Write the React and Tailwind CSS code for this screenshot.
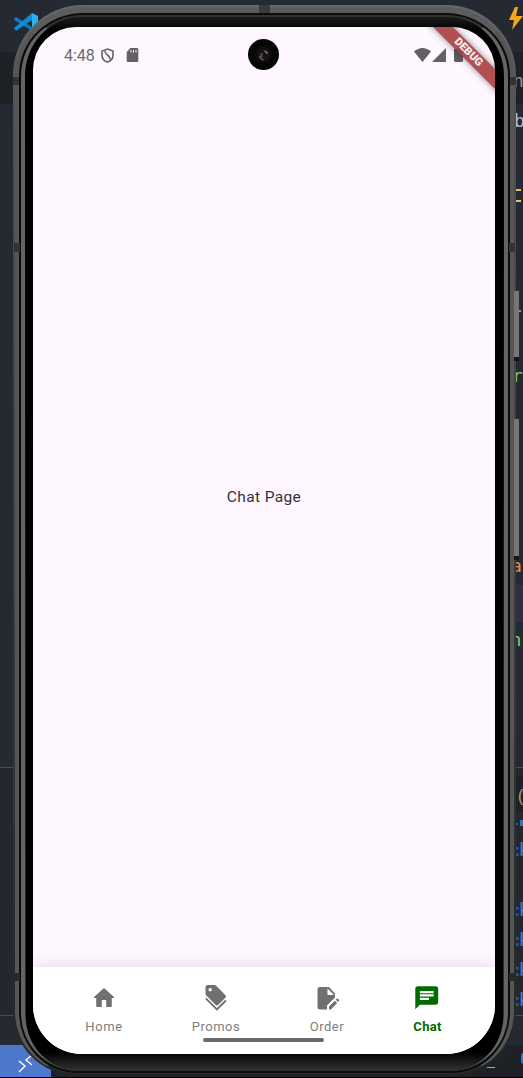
import React from 'react';

const codeMarks = [
  ['top-[69px] left-[513px] text-[#8f98a8]', 'n'],
  ['top-[109px] left-[514px] text-[#b5bdcc]', 'b'],
  ['top-[364px] left-[512px] text-[#8bce70]', 'r'],
  ['top-[554px] left-[511px] text-[#dc8e55]', 'a'],
  ['top-[628px] left-[510.5px] text-[#8bce70]', 'n'],
  ['top-[785px] left-[515px] text-[#a98d70]', '('],
];

const logLines = [
  'top-[838px]',
  'top-[898px]',
  'top-[928px]',
  'top-[958px]',
  'top-[988px]',
];

function Editor() {
  return (
    <div className="absolute inset-0 flex flex-col bg-[#242a33]">
      <div className="h-[52px] bg-[#242932]" />
      <div className="h-[52px] bg-[#1e2227]" />
      <div className="h-[481px] bg-[#242a33]" />
      <div className="flex h-[37px] justify-end">
        <div className="w-[40px] bg-[#2c3140]" />
      </div>
      <div className="h-[145px] bg-[#242a33]" />
      <div className="h-px bg-[#484d54]" />
      <div className="flex h-[247px] justify-end bg-[#23282e] pt-[8px]">
        <div className="h-[36px] w-[40px] bg-[#1e2227]" />
      </div>
      <div className="h-px bg-[#484d54]" />
      <div className="h-[29px] bg-[#242932]" />
      <div className="flex h-[32px] bg-[#1e2227]"><div className="w-[51px] bg-[#4d78cc]" /></div>
      <div className="h-px bg-black" />
      <svg className="absolute top-[12px] left-[14px]" width="25" height="20" viewBox="0 0 25 20">
        <path d="M0 7l2-2 16 10v4L0 8z" fill="#087cc5" />
        <path d="M0 16L18 1v7L2 19z" fill="#1687cf" />
        <path d="M18 1l6 3v12l-6 4z" fill="#2bb0f5" />
      </svg>
      <svg className="absolute top-[1054px] left-[18px]" width="16" height="19" viewBox="0 0 16 19" fill="none" stroke="white" strokeWidth="1.4">
        <path d="M1 7l6 5-6 6M14 1L8 6l6 5" />
      </svg>
      <svg className="absolute top-[7px] left-[509px]" width="14" height="24" viewBox="0 0 14 24">
        <path d="M6 0L0 13h5L3 23l11-14H7l2-9z" fill="#f5a51d" />
      </svg>
      {codeMarks.map(([cls, text], i) => (
        <span key={i} className={`absolute font-['DejaVu_Sans_Mono',monospace] text-[18px] leading-[24px] whitespace-pre ${cls}`}>{text}</span>
      ))}
      {logLines.map((cls) => (
        <span key={cls} className={`absolute left-[512px] font-['DejaVu_Sans_Mono',monospace] text-[18px] leading-[24px] tracking-[-4px] whitespace-pre text-[#2f83f6] ${cls}`}>
          <span className="text-[#2a5e9c]">:</span>k
        </span>
      ))}
      <i className="absolute top-[823px] left-[516px] h-[2px] w-[2px] bg-[#2a5e9c]" />
      <i className="absolute top-[820px] left-[520px] h-[6px] w-[3px] bg-[#2f74c6]" />
      <i className="absolute top-[189px] left-[516px] h-[2px] w-[5px] bg-[#eabd6b]" />
      <i className="absolute top-[200px] left-[516px] h-[2px] w-[5px] bg-[#eabd6b]" />
      <i className="absolute top-[310px] left-[519px] h-[2px] w-[2px] bg-[#dc8055]" />
      <i className="absolute top-[1067px] left-[487px] h-px w-[8px] bg-[#a7adb5]" />
      <i className="absolute top-[1053px] left-[521px] h-[11px] w-[6px] rounded-full bg-[#1684c6]" />
    </div>
  );
}

function StatusBar() {
  return (
    <div className="flex h-[56px] shrink-0 items-center pl-[31px] text-[#626064]">
      <span className="w-[37px] pt-px text-[16px] leading-5 text-[#6d6b6f]">4:48</span>
      <svg width="13" height="15" viewBox="0 0 13 15" fill="none" stroke="currentColor" strokeWidth="1.6">
        <path d="M6.5 1L12 3v4.200c0 3.200-2.200 5.800-5.500 6.900C3.200 13 1 10.400 1 7.200V3z" />
        <path d="M4 3.200c-.6 3.600 5.600 4 5 8.400" />
      </svg>
      <svg className="ml-[12px]" width="13" height="14" viewBox="0 0 13 14" fill="currentColor">
        <path fillRule="evenodd" d="M4.500 0H11a1.300 1.300 0 011.300 1.300v11.400A1.300 1.300 0 0111 14H2a1.300 1.300 0 01-1.300-1.300V4zM4.500 2v2.500H5.500V2zm2.500 0v2.500h1V2zm2.500 0v2.500h1V2z" />
      </svg>
      <div className="ml-auto flex items-center pr-[32px]">
        <svg width="17" height="14" viewBox="0 0 17 14" fill="currentColor"><path d="M0 3.600C5-1.100 12-1.100 17 3.600L8.500 14z" /></svg>
        <svg className="ml-[1px]" width="14" height="14" viewBox="0 0 14 14" fill="currentColor"><path d="M14 0v14H0z" /></svg>
        <svg className="ml-[8px]" width="9" height="14" viewBox="0 0 9 14" fill="currentColor"><path d="M2.500 1V0h4v1H9v12l-1 1H1l-1-1V1z" /></svg>
      </div>
    </div>
  );
}

function Camera() {
  return (
    <div className="absolute top-[12px] left-[215px] size-[31px] rounded-full bg-[#060606] p-[7px]">
      <div className="flex size-[17px] items-center justify-center rounded-full bg-[#100f0f]">
        <svg width="13" height="13" viewBox="0 0 13 13">
          <circle cx="6.500" cy="6.500" r="5.500" fill="#171414" />
          <path d="M2.500 8q1 3 4 4" fill="none" stroke="#77736a" strokeWidth="1.200" />
          <path d="M7.500 3q3 1 2.500 3" fill="none" stroke="#90607f" strokeWidth="1.600" />
          <circle cx="5" cy="7" r="2" fill="#594220" />
          <circle cx="7" cy="7" r="1.500" fill="#100c0f" />
        </svg>
      </div>
    </div>
  );
}

function Tab({ label, className, labelClass = '', children }) {
  return (
    <div className={`flex flex-col items-center ${className}`}>
      <div className="flex h-[30px] items-center justify-center">{children}</div>
      <span className={`mt-[6px] text-[13px] leading-[16px] whitespace-nowrap ${labelClass}`}>{label}</span>
    </div>
  );
}

function Navigation() {
  return (
    <div className="relative flex h-[87px] shrink-0 bg-white pt-[16px] text-[#707070] shadow-[0_-3px_12px_#67507526]">
      <Tab label="Home" className="ml-[31px] w-[80px]" labelClass="tracking-[.65px] text-[#7e7e7e]">
        <svg className="mb-px" width="20" height="19" viewBox="0 0 20 19" fill="currentColor"><path d="M10 0l10 9v1h-2.200v8.200a.8.8 0 01-.8.8h-4.800v-7H7.800v7H3a.8.8 0 01-.8-.8V10H0V9z" /></svg>
      </Tab>
      <Tab label="Promos" className="ml-[32px] w-[80px]" labelClass="tracking-[.5px] text-[#7e7e7e]">
        <svg width="22" height="28" viewBox="0 0 22 28" fill="currentColor">
          <path fillRule="evenodd" d="M3 1h6.500a2 2 0 011.400.6L20.300 11a2 2 0 010 2.800l-7 7a2 2 0 01-2.800 0L1.100 11.300A2 2 0 01.5 10V3.500A2.500 2.500 0 013 1zm2.200 3a1.700 1.700 0 100 3.400 1.700 1.700 0 000-3.400z" />
          <path d="M.8 14.300l11.100 11.200 9-9" fill="none" stroke="currentColor" strokeWidth="1.900" />
        </svg>
      </Tab>
      <Tab label="Order" className="ml-[31px] w-[80px]" labelClass="tracking-[.5px] text-[#7e7e7e]">
        <svg width="24" height="24" viewBox="0 0 24 24" fill="currentColor">
          <path fillRule="evenodd" d="M5 1h9l6 6.500V11.500L12 19.500V23.500H5A2.500 2.500 0 012.500 21V3.500A2.500 2.500 0 015 1zm7.500 1.500V9H19z" />
          <path d="M14 20.500l5.800-5.800 2.300 2.300-6.200 6.500H14zM20.800 13.700l.9-.9q.7-.7 1.300 0l.9.9q.6.600 0 1.300l-.9.900z" />
        </svg>
      </Tab>
      <Tab label="Chat" className="ml-[20.5px] w-[80px] text-[#006b00]" labelClass="font-bold tracking-[.3px]">
        <svg className="mr-px" width="27.5" height="27.5" viewBox="0 0 24 24" fill="currentColor"><path d="M20 2H4c-1.100 0-1.990.9-1.990 2L2 22l4-4h14c1.100 0 2-.9 2-2V4c0-1.100-.9-2-2-2zM6 9h12v2H6V9zm8 5H6v-2h8v2zm4-6H6V6h12v2z" /></svg>
      </Tab>
      <div className="absolute top-[71px] left-[170px] h-[4px] w-[121px] rounded-full bg-[#6b6b6b]" />
    </div>
  );
}

function Screen() {
  return (
    <div className="relative flex h-[1027px] w-[462px] flex-col overflow-hidden rounded-t-[43px] rounded-b-[49px] bg-[#fef7ff]">
      <StatusBar />
      <main className="flex min-h-0 flex-1 items-center justify-center pb-[56px]">
        <p className="text-[15.5px] leading-5 tracking-[.38px] text-[#353138]">Chat Page</p>
      </main>
      <Navigation />
      <Camera />
      <div className="absolute top-[19px] left-[376px] flex h-[14px] w-[120px] rotate-45 items-center justify-center bg-[#a83f41e8] pr-[2px] text-[11px] font-black text-white/90 shadow-[0_0_7px_#0007]">DEBUG</div>
    </div>
  );
}

export default function App() {
  return (
    <div className="relative h-[1078px] w-[523px] overflow-hidden font-[Roboto,sans-serif]">
      <Editor />
      <div className="relative pt-[5px] pl-[13px]">
        <div className="relative h-[1070px] w-[503px] rounded-t-[70px] rounded-b-[63px] bg-linear-to-b from-[#686868] via-[#505050] via-10% to-[#242626] px-[2px] pt-[2px] pb-px">
          <i className="absolute top-[286px] left-[501px] h-[70px] w-[5px] border-b-4 border-[#151515] bg-[#777675]" />
          <i className="absolute top-[414px] left-[501px] h-[141px] w-[5px] border-b-4 border-[#151515] bg-[#777675]" />
          <div className="h-full rounded-t-[68px] rounded-b-[62px] border-x-4 border-t-[6px] border-b border-x-[#565656] border-t-[#5c5c5c] border-b-[#292b2b] bg-[#0c0c0c] px-[2px] pt-[2px] pb-[2px]">
            <div className="h-full rounded-t-[61px] rounded-b-[58px] border-x-[4px] border-t-2 border-x-[#646464] border-t-[#303030] bg-linear-to-b from-[#202020] via-[#020202] via-2% to-[#303030] px-px">
              <div className="h-full rounded-t-[56px] rounded-b-[54px] bg-[linear-gradient(#1b1b1b_0,#000_14px,#000_1035px,#333_100%)] px-[7px] pt-[10px]">
                <Screen />
              </div>
            </div>
          </div>
          <i className="absolute top-[72px] left-0 h-[8px] w-[6px] bg-[#343434]" />
          <i className="absolute top-[72px] right-0 h-[8px] w-[6px] bg-[#343434]" />
          <i className="absolute top-[238px] left-px h-[9px] w-[6px] bg-[#343434]" />
          <i className="absolute top-[238px] right-px h-[9px] w-[6px] bg-[#343434]" />
          <i className="absolute top-[968px] left-px h-[8px] w-[6px] bg-[#292929]" />
          <i className="absolute top-[968px] right-px h-[8px] w-[6px] bg-[#292929]" />
          <i className="absolute top-0 left-[246px] h-[8px] w-[11px] bg-[#3a3a3a]" />
        </div>
      </div>
    </div>
  );
}
